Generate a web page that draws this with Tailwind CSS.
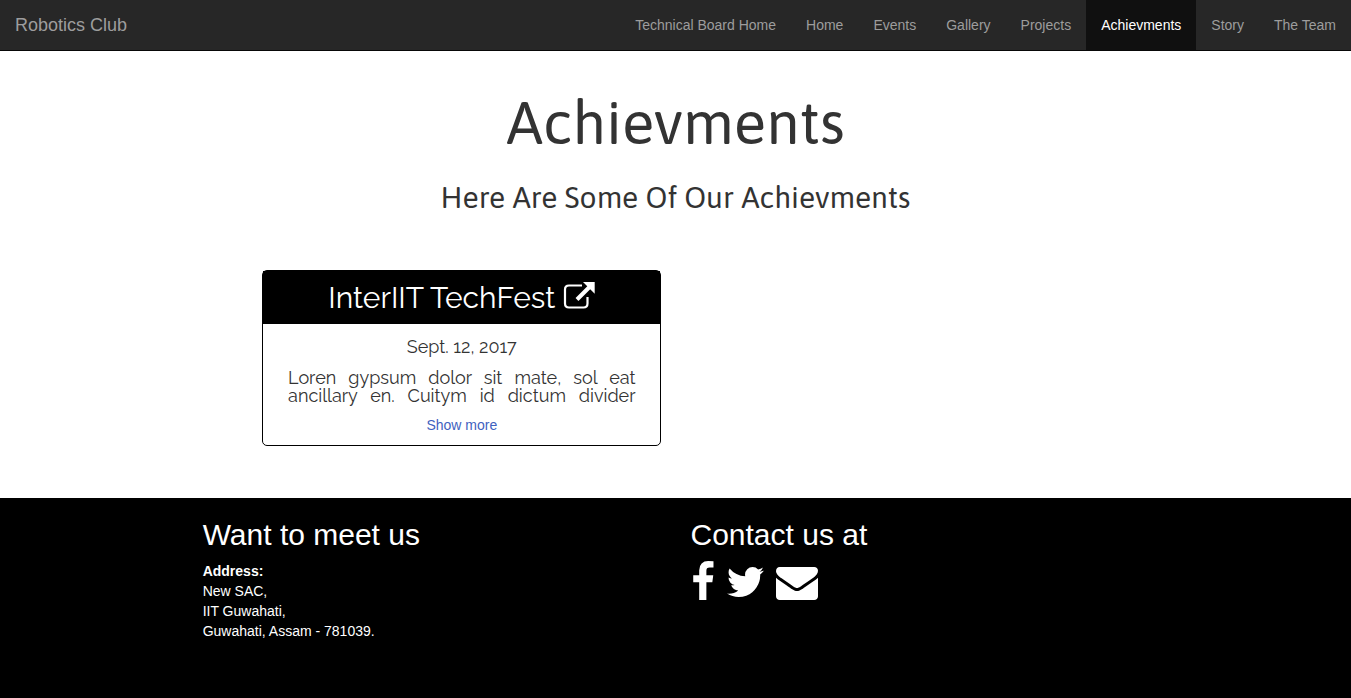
<!DOCTYPE html>
<html lang="en">
<head>
<meta charset="utf-8">
<meta name="viewport" content="width=device-width, initial-scale=1">
<title>Robotics Club - Achievments</title>
<script src="https://cdn.jsdelivr.net/npm/@tailwindcss/browser@4"></script>
</head>
<body class="flex min-h-screen flex-col bg-white font-['Liberation_Sans',Arial,sans-serif] text-sm leading-5 text-[#333]">
<nav class="flex items-start justify-between border-b border-[#080808] bg-[#272727] text-[#9d9d9d]">
  <a href="#" class="p-[15px] text-lg leading-5">Robotics Club</a>
  <ul class="flex">
    <li><a href="#" class="block p-[15px]">Technical Board Home</a></li>
    <li><a href="#" class="block p-[15px]">Home</a></li>
    <li><a href="#" class="block p-[15px]">Events</a></li>
    <li><a href="#" class="block p-[15px]">Gallery</a></li>
    <li><a href="#" class="block p-[15px]">Projects</a></li>
    <li><a href="#" aria-current="page" class="block bg-[#101010] p-[15px] text-white">Achievments</a></li>
    <li><a href="#" class="block p-[15px]">Story</a></li>
    <li><a href="#" class="block p-[15px]">The Team</a></li>
  </ul>
</nav>

<main class="flex-1 pb-[52px]">
  <header class="pt-[39px] text-center font-['Asap','Noto_Sans',sans-serif]">
    <h1 class="text-6xl leading-[66px]">Achievments</h1>
    <h2 class="mt-[25px] text-3xl leading-[33px]">Here Are Some Of Our Achievments</h2>
  </header>
  <section class="mx-auto mt-14 grid w-[61.2%] grid-cols-2 gap-7">
    <article class="rounded-[5px] border border-black text-center">
      <h3 class="bg-black py-2.5 font-['Raleway','Open_Sans',sans-serif] text-3xl leading-[33px] text-white">
        <a href="#" class="flex items-start justify-center gap-2">InterIIT TechFest
          <svg class="size-8" viewBox="0 0 32 32" aria-hidden="true">
            <path d="M19 4.500H6Q2 4.500 2 8.500V22.500Q2 26.500 6 26.500H20.500Q24.500 26.500 24.500 22.500V16" fill="none" stroke="currentColor" stroke-width="2.200"/>
            <path d="M20 1H31.700V12.800Z" fill="currentColor"/>
            <path d="M14 18.500L27.500 5" fill="none" stroke="currentColor" stroke-width="4"/>
          </svg>
        </a>
      </h3>
      <div class="px-[25px] pt-3.5 pb-2.5 font-['Raleway','Lato',sans-serif] text-lg leading-[18px]">
        <p>Sept. 12, 2017</p>
        <p class="mt-[13px] text-justify [text-align-last:justify]">Loren gypsum dolor sit mate, sol eat<br>ancillary en. Cuitym id dictum divider</p>
        <button type="button" class="mt-2.5 cursor-pointer font-['Liberation_Sans',Arial,sans-serif] text-sm leading-5 text-[#3f62c0]">Show more</button>
      </div>
    </article>
  </section>
</main>

<footer class="min-h-[200px] bg-black text-white">
  <div class="mx-auto w-[70%] pt-5">
    <div class="-mx-[15px] grid grid-cols-2">
      <section class="px-[15px]">
        <h2 class="mb-2.5 text-3xl leading-[33px]">Want to meet us</h2>
        <address class="not-italic"><strong>Address:</strong><br>New SAC,<br>IIT Guwahati,<br>Guwahati, Assam - 781039.</address>
      </section>
      <section class="px-[15px]">
        <h2 class="mb-2.5 text-3xl leading-[33px]">Contact us at</h2>
        <div class="flex gap-[11px]">
          <a href="#" aria-label="Facebook"><svg class="h-[42px] w-6" viewBox="0 0 1024 1792" fill="currentColor"><path transform="translate(0 1536) scale(1 -1)" d="M959 1524v-264h-157q-86 0 -116 -36t-30 -108v-189h293l-39 -296h-254v-759h-306v759h-255v296h255v218q0 186 104 288.500t277 102.500q147 0 228 -12z"/></svg></a>
          <a href="#" aria-label="Twitter"><svg class="h-[42px] w-[39px]" viewBox="0 0 1664 1792" fill="currentColor"><path transform="translate(0 1536) scale(1 -1)" d="M1620 1128q-67 -98 -162 -167q1 -14 1 -42q0 -130 -38 -259.500t-115.500 -248.500t-184.500 -210.500t-258 -146t-323 -54.500q-271 0 -496 145q35 -4 78 -4q225 0 401 138q-105 2 -188 64.500t-114 159.500q33 -5 61 -5q43 0 85 11q-112 23 -185.500 111.500t-73.500 205.500v4q68 -38 146 -41q-66 44 -105 115t-39 154q0 88 44 163q121 -149 294.500 -238.500t371.500 -99.500q-8 38 -8 74q0 134 94.500 228.500t228.500 94.500q140 0 236 -102q109 21 205 78q-37 -115 -142 -178q93 10 186 50z"/></svg></a>
          <a href="#" aria-label="Email"><svg class="size-[42px]" viewBox="0 0 1792 1792" fill="currentColor"><path transform="translate(0 1536) scale(1 -1)" d="M1792 826v-794q0 -66 -47 -113t-113 -47h-1472q-66 0 -113 47t-47 113v794q44 -49 101 -87q362 -246 497 -345q57 -42 92.500 -65.500t94.500 -48t110 -24.500h1h1q51 0 110 24.500t94.500 48t92.500 65.500q170 123 498 345q57 39 100 87zM1792 1120q0 -79 -49 -151t-122 -123q-376 -261 -468 -325q-10 -7 -42.500 -31t-54 -38.500t-52 -32.500t-57.500 -27t-50 -9h-1h-1q-23 0 -50 9t-57.500 27t-52 32.500t-54 38.500t-42.500 31q-91 64 -262 182.500t-205 142.500q-62 42 -117 115.500t-55 136.500q0 78 41.500 130t118.500 52h1472q65 0 112.500 -47t47.500 -113z"/></svg></a>
        </div>
      </section>
    </div>
  </div>
</footer>
</body>
</html>
